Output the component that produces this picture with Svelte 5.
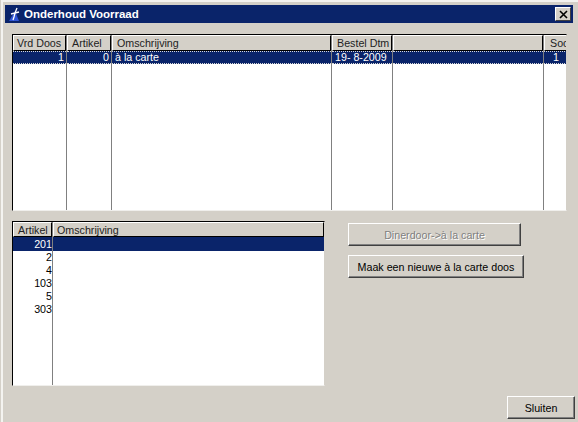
<script>
	const stockColumns = [
		{ label: 'Vrd Doos', width: 54, pad: 3, value: '1', align: 'right' },
		{ label: 'Artikel', width: 45, pad: 4, value: '0', align: 'right' },
		{ label: 'Omschrijving', width: 220, pad: 4, value: 'à la carte', align: 'left' },
		{ label: 'Bestel Dtm', width: 61, pad: 4, value: '19- 8-2009', align: 'left' },
		{ label: '', width: 151, pad: 4, value: '', align: 'left' },
		{ label: 'Soo', width: 23, pad: 5, value: '1', align: 'center' }
	];

	const articles = ['201', '2', '4', '103', '5', '303'];
</script>

<div class="window">
	<header class="titlebar">
		<svg class="app-icon" viewBox="0 0 16 16" width="16" height="16">
			<path d="M2 15 L8 5 L12 15 Z" fill="#2f55d4" />
			<path d="M10 2 L8 7 L4 8 M8 7 L12 6 M8 7 L7 11 L6 14" fill="none" stroke="#fff" stroke-width="1.3" />
		</svg>
		<span class="title">Onderhoud Voorraad</span>
		<button class="close" aria-label="Sluiten">
			<svg viewBox="0 0 9 9" width="9" height="9">
				<path d="M1 1 L8 8 M8 1 L1 8" stroke="#000" stroke-width="1.6" />
			</svg>
		</button>
	</header>

	<div class="content">
		<div class="grid stock">
			{#each stockColumns as col}
				<div class="col" style="width: {col.width}px">
					<div class="head" style="padding-left: {col.pad}px">{col.label}</div>
					<div class="cell selected focused" style="text-align: {col.align}">{col.value}</div>
				</div>
			{/each}
		</div>

		<div class="lower">
			<div class="grid articles">
				<div class="col article-col">
					<div class="head short">Artikel</div>
					{#each articles as nr, i}
						<div class="cell number" class:selected={i === 0}>{nr}</div>
					{/each}
				</div>
				<div class="col desc-col">
					<div class="head short omschrijving">Omschrijving</div>
					<div class="cell selected"></div>
				</div>
			</div>

			<div class="actions">
				<button class="btn wide" disabled>Dinerdoor-&gt;à la carte</button>
				<button class="btn wider">Maak een nieuwe à la carte doos</button>
			</div>
		</div>

		<div class="footer">
			<button class="btn close-btn">Sluiten</button>
		</div>
	</div>
</div>

<style>
	:global(body) {
		margin: 0;
		background: #d4d0c8;
	}

	.window {
		box-sizing: border-box;
		width: 577px;
		height: 422px;
		margin-left: 1px;
		padding: 3px 5px 0 2px;
		background: #d4d0c8;
		border-top: 2px solid #f4f3f0;
		border-left: 2px solid #f4f3f0;
		font: 10.7px "Liberation Sans", Arial, sans-serif;
		color: #000;
		overflow: hidden;
	}

	.titlebar {
		display: flex;
		align-items: center;
		height: 18px;
		padding-left: 2px;
		background: #0a246a;
		color: #fff;
	}

	.app-icon {
		flex-shrink: 0;
	}

	.title {
		flex: 1;
		margin-left: 1px;
		font-size: 11.5px;
		font-weight: bold;
	}

	.close {
		display: flex;
		align-items: center;
		justify-content: center;
		width: 16px;
		height: 14px;
		margin-right: 2px;
		padding: 0;
		background: #d4d0c8;
		border: 1px solid;
		border-color: #fff #404040 #404040 #fff;
	}

	.content {
		padding: 11px 0 0 7px;
	}

	.grid {
		display: flex;
		box-sizing: border-box;
		background: #fff;
		border-top: 1px solid #000;
		border-left: 1px solid #000;
		border-right: 1px solid #d4d0c8;
		border-bottom: 1px solid #f0efec;
		overflow: hidden;
	}

	.stock {
		width: 555px;
		height: 177px;
	}

	.col {
		box-sizing: border-box;
		flex-shrink: 0;
		border-right: 1px solid #808080;
		overflow: hidden;
	}

	.col:last-child {
		border-right: 0;
	}

	.head {
		box-sizing: border-box;
		height: 16px;
		padding: 0 0 0 4px;
		line-height: 14px;
		white-space: nowrap;
		background: #d4d0c8;
		border-top: 1px solid #fff;
		border-left: 1px solid #fff;
		border-right: 1px solid #000;
		border-bottom: 1px solid #000;
		color: #222;
	}

	.head.short {
		height: 15px;
	}

	.head.omschrijving {
		padding-left: 3px;
	}

	.cell {
		box-sizing: border-box;
		height: 13px;
		padding: 0 2px 0 3px;
		line-height: 13px;
		white-space: nowrap;
	}

	.selected {
		background: #0a246a;
		color: #fff;
	}

	.focused {
		border-top: 1px dotted #d8d8d8;
		border-bottom: 1px dotted #d8d8d8;
		line-height: 11px;
	}

	.lower {
		display: flex;
		align-items: flex-start;
		margin-top: 10px;
	}

	.articles {
		width: 313px;
		height: 165px;
	}

	.article-col {
		width: 40px;
	}

	.desc-col {
		flex: 1;
	}

	.number {
		padding: 0;
		text-align: right;
	}

	.articles .selected:not(.number) {
		height: 14px;
	}

	.articles .number.selected {
		height: 14px;
		line-height: 14px;
	}

	.actions {
		display: flex;
		flex-direction: column;
		align-items: flex-start;
		gap: 9px;
		margin: 2px 0 0 23px;
	}

	.btn {
		box-sizing: border-box;
		height: 23px;
		padding: 0;
		background: #d4d0c8;
		font: inherit;
		color: #000;
		border: 1px solid;
		border-color: #fff #404040 #404040 #fff;
		box-shadow: inset -1px -1px 0 #808080;
	}

	.btn:disabled {
		color: #808080;
		text-shadow: 1px 1px 0 #fff;
	}

	.wide {
		width: 173px;
	}

	.wider {
		width: 176px;
	}

	.footer {
		display: flex;
		justify-content: flex-end;
		margin: 10px -2px 0 0;
	}

	.close-btn {
		width: 68px;
	}
</style>
